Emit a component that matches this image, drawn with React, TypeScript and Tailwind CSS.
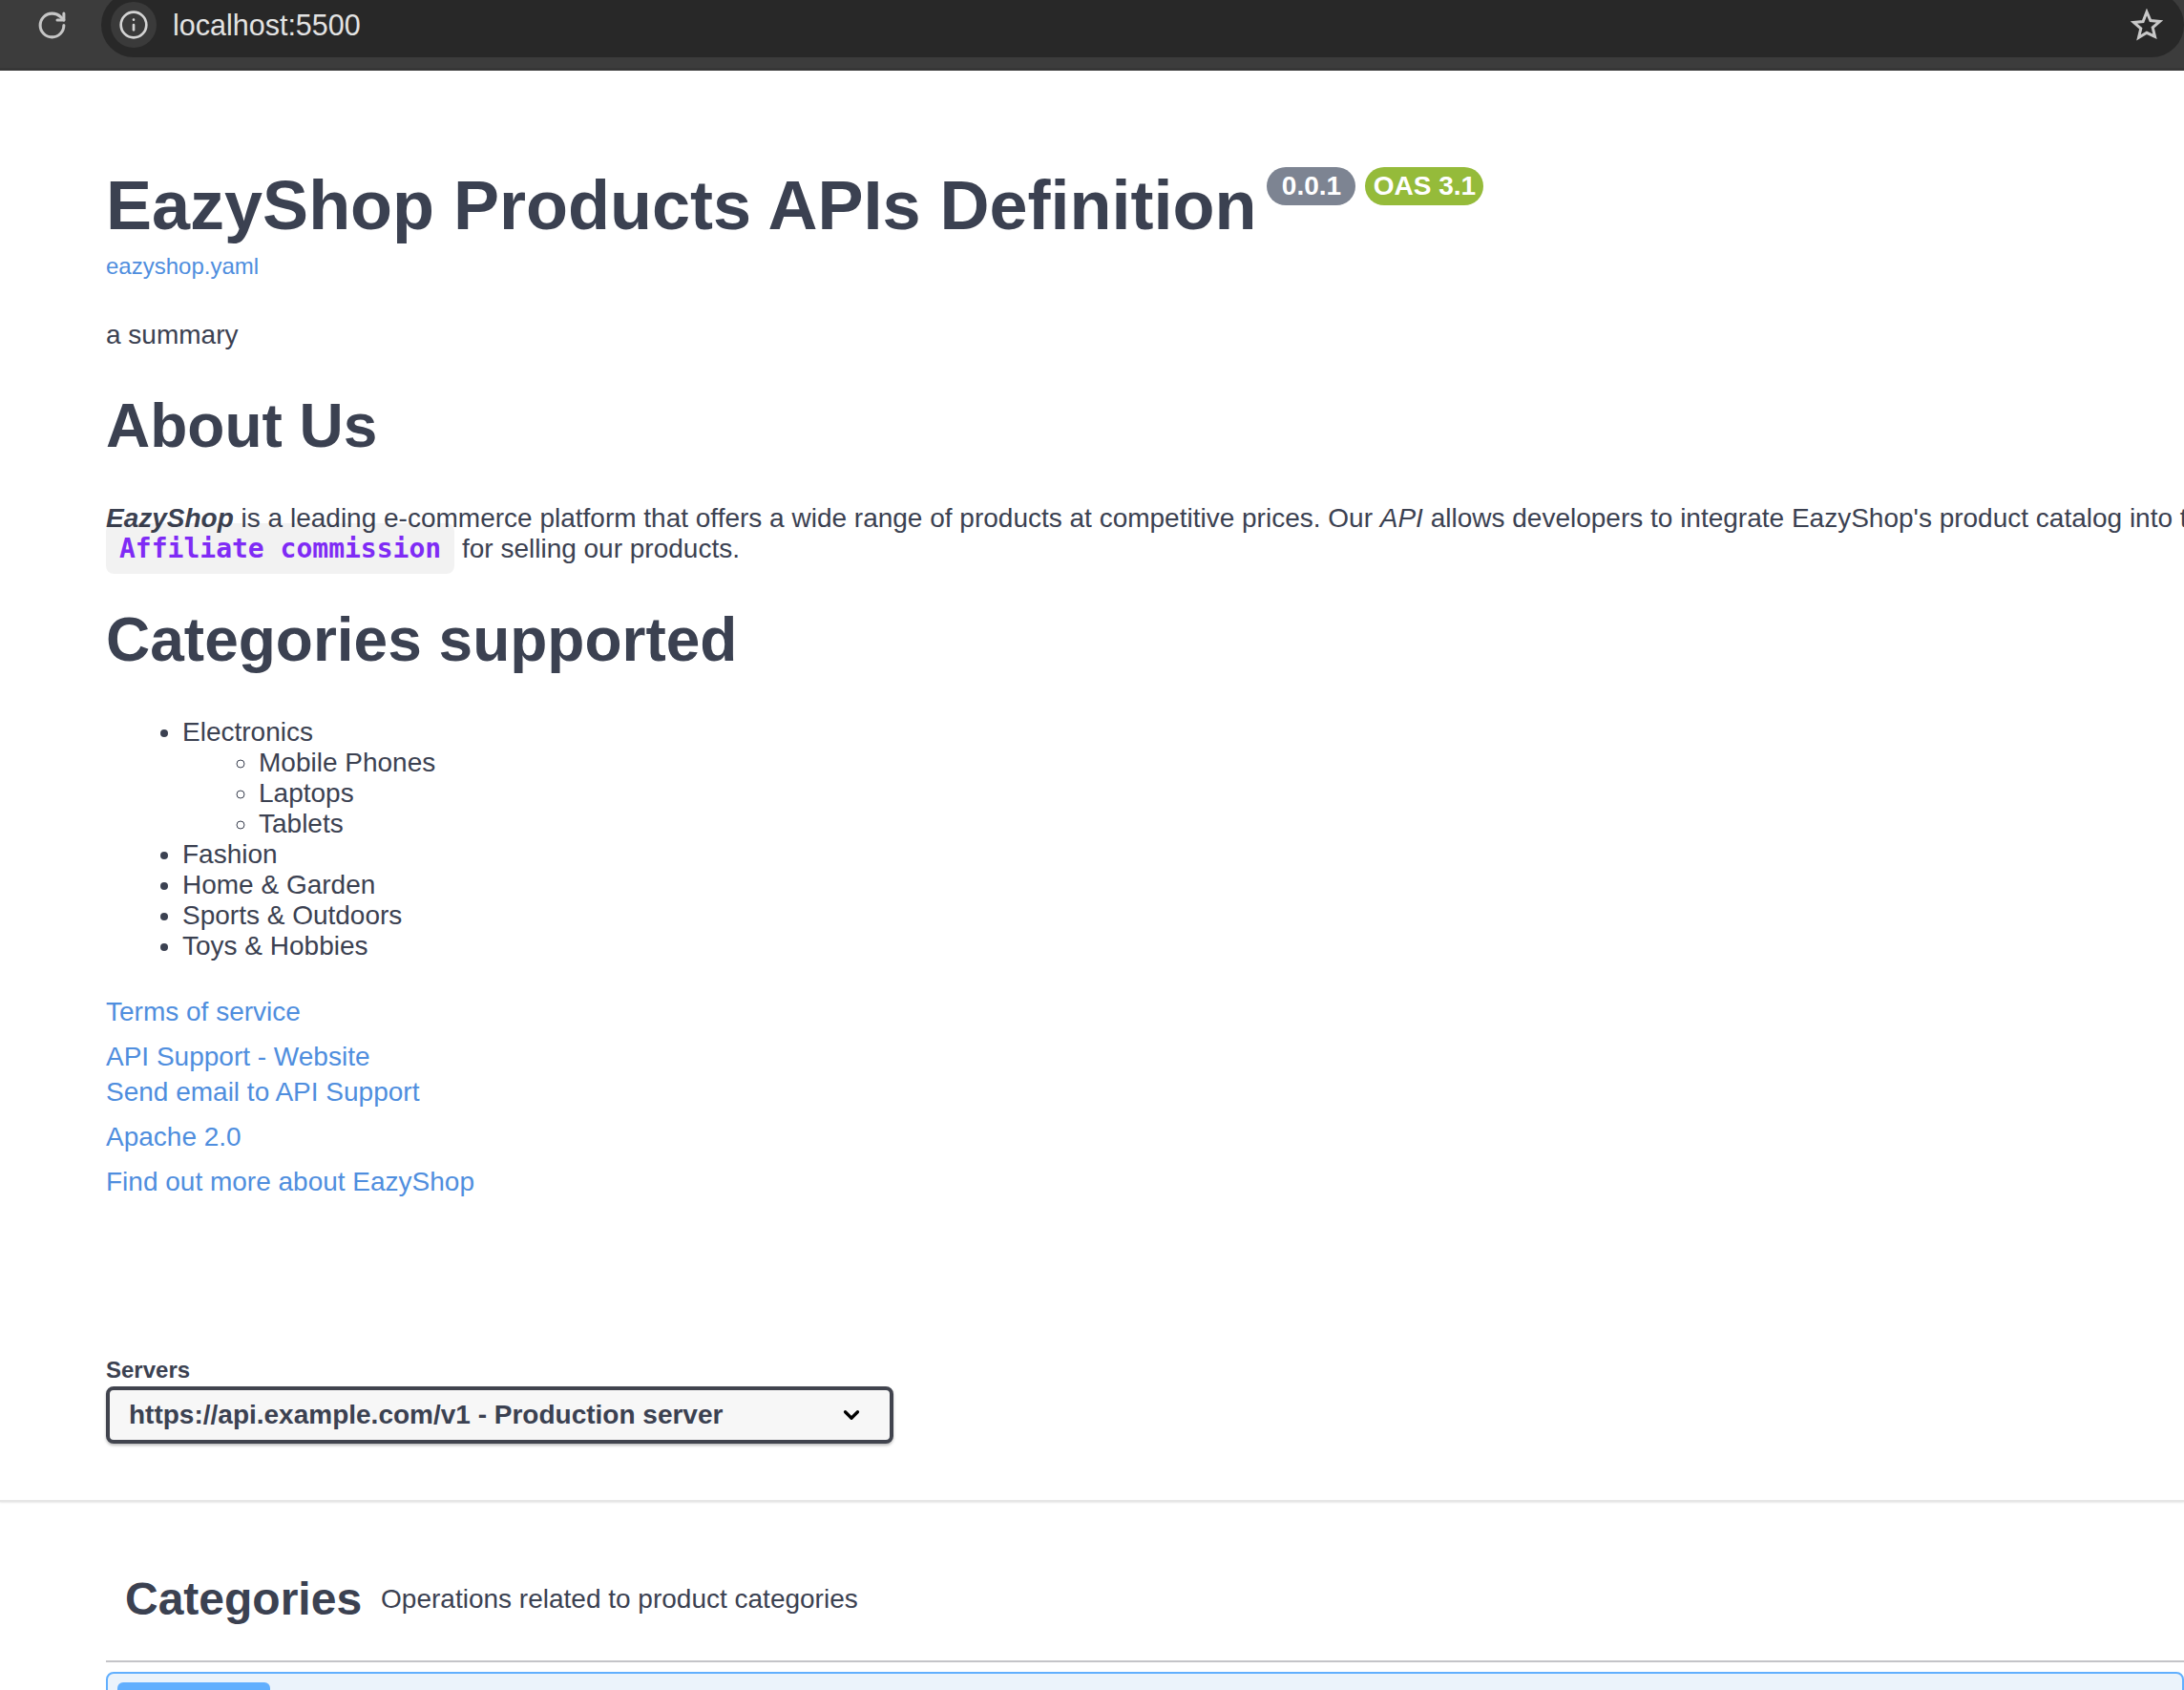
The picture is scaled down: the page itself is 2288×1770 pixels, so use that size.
import { Info, RotateCw, ChevronDown } from "lucide-react";

const categories = ["Fashion", "Home & Garden", "Sports & Outdoors", "Toys & Hobbies"];
const phones = ["Mobile Phones", "Laptops", "Tablets"];

function BrowserBar() {
  return (
    <div className="flex h-[74px] shrink-0 items-start overflow-hidden border-b-[3px] border-[#363636] bg-[#3c3c3c]">
      <div className="flex h-[52px] w-[106px] shrink-0 items-center pl-[38px]">
        <RotateCw className="h-[33px] w-[33px] text-[#c6c6c6]" strokeWidth={2.2} />
      </div>
      <div className="-mt-[8px] flex h-[68px] flex-1 items-center rounded-[34px] bg-[#282828] pl-[10px] pr-[22px]">
        <div className="flex h-[48px] w-[48px] items-center justify-center rounded-full bg-[#3a3a3a]">
          <Info className="h-[32px] w-[32px] text-[#d4d4d4]" strokeWidth={2} />
        </div>
        <span className="ml-[17px] text-[30.5px] text-[#e3e3e3]">localhost:5500</span>
        <svg className="ml-auto h-[34px] w-[34px] text-[#c8c8c8]" viewBox="0 0 34 34" fill="none">
          <path
            d="M17 3.5l3.9 9.1 9.8.8-7.5 6.4 2.3 9.6L17 25.3l-8.5 5.1 2.3-9.6-7.5-6.4 9.8-.8z"
            stroke="currentColor"
            strokeWidth="3"
            strokeLinejoin="miter"
          />
        </svg>
      </div>
    </div>
  );
}

export default function App() {
  return (
    <div className="flex h-[1770px] w-[2288px] flex-col overflow-hidden bg-white font-['Liberation_Sans',Arial,sans-serif] text-[28px] leading-[32px] text-[#3b4151]">
      <BrowserBar />
      <div className="pl-[111px]">
        <div className="mt-[99px] flex items-start">
          <h1 className="text-[72px] font-bold leading-[84px]">EazyShop Products APIs Definition</h1>
          <span className="ml-[11px] mt-[2px] flex h-[40px] w-[93px] items-center justify-center rounded-[20px] bg-[#7d8492] font-bold text-white">0.0.1</span>
          <span className="ml-[10px] mt-[2px] flex h-[40px] w-[124px] items-center justify-center rounded-[20px] bg-[#95bb3a] font-bold text-white">OAS 3.1</span>
        </div>
        <a className="mt-[8px] block text-[24px] leading-[28px] text-[#4f8ede]">eazyshop.yaml</a>
        <p className="mt-[42px]">a summary</p>
        <h2 className="mt-[39px] text-[64px] font-bold leading-[80px]">About Us</h2>
        <p className="mt-[41px] whitespace-nowrap">
          <em className="font-bold">EazyShop</em> is a leading e-commerce platform that offers a wide range of products at competitive prices. Our <em>API</em> allows developers to integrate EazyShop's product catalog into their applications and earn an
          <br />
          <code className="rounded-[8px] bg-black/5 px-[14px] py-[10px] font-['DejaVu_Sans_Mono',monospace] font-bold text-[#7f2bf5]">Affiliate commission</code> for selling our products.
        </p>
        <h2 className="mt-[39px] text-[64px] font-bold leading-[80px]">Categories supported</h2>
        <ul className="mt-[41px] list-disc pl-[80px]">
          <li>
            Electronics
            <ul className="list-[circle] pl-[80px]">
              {phones.map((item) => (
                <li key={item}>{item}</li>
              ))}
            </ul>
          </li>
          {categories.map((item) => (
            <li key={item}>{item}</li>
          ))}
        </ul>
        <div className="text-[#4f8ede]">
          <p className="mt-[37px]">Terms of service</p>
          <p className="mt-[15px]">API Support - Website</p>
          <p className="mt-[5px]">Send email to API Support</p>
          <p className="mt-[15px]">Apache 2.0</p>
          <p className="mt-[15px]">Find out more about EazyShop</p>
        </div>
        <div className="mt-[167px] text-[24px] font-bold leading-[28px]">Servers</div>
        <div className="mt-[3px] flex h-[60px] w-[825px] items-center justify-between rounded-[8px] border-4 border-[#41444e] bg-[#f7f7f7] pl-[20px] pr-[30px] font-bold shadow-[0_2px_3px_rgba(0,0,0,0.25)]">
          <span>https://api.example.com/v1 - Production server</span>
          <ChevronDown className="mr-[-3px] h-[26px] w-[26px] text-black" strokeWidth={3} />
        </div>
      </div>
      <div className="mt-[59px] h-[2px] shrink-0 bg-[#e6e6e6] shadow-[0_1px_2px_rgba(0,0,0,0.1)]" />
      <div className="pl-[111px]">
        <div className="mt-[70px] flex items-center pl-[20px]">
          <h3 className="text-[48px] font-bold leading-[64px]">Categories</h3>
          <span className="ml-[20px]">Operations related to product categories</span>
        </div>
        <div className="mt-[32px] h-[2px] bg-[#c4c4c8]" />
        <div className="mt-[10px] h-[120px] rounded-[8px] border-2 border-[#61affe] bg-[#ebf3fb] pl-[10px] pt-[9px]">
          <div className="h-[40px] w-[160px] rounded-[6px] bg-[#61affe]" />
        </div>
      </div>
    </div>
  );
}
